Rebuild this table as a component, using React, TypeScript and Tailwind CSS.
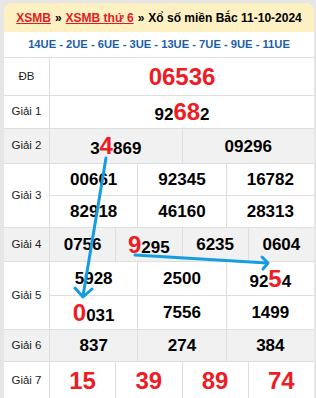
import type { ReactNode } from "react";

const Big = ({ children }: { children: ReactNode }) => (
  <span className="text-[24px] text-[#ee1c24]">{children}</span>
);

const Cell = ({ children, last }: { children: ReactNode; last?: boolean }) => (
  <div
    className={`flex-1 flex items-center justify-center text-[17px] font-bold text-black leading-none ${
      last ? "" : "border-r border-[#dedede]"
    }`}
  >
    <span>{children}</span>
  </div>
);

interface RowProps {
  label: string;
  h: string;
  gray?: boolean;
  children: ReactNode;
}

const Row = ({ label, h, gray, children }: RowProps) => (
  <div
    className={`flex ${h} border-b border-[#dedede] ${
      gray ? "bg-[#f1f1f1]" : "bg-white"
    }`}
  >
    <div className="w-[46px] shrink-0 flex items-center justify-center border-r border-[#dedede] text-[11.5px] text-[#222]">
      {label}
    </div>
    <div className="flex-1 flex flex-col">{children}</div>
  </div>
);

const Line = ({ children, top }: { children: ReactNode; top?: boolean }) => (
  <div className={`flex flex-1 ${top ? "border-b border-[#dedede]" : ""}`}>
    {children}
  </div>
);

export default function App() {
  return (
    <div className="relative w-[316px] h-[398px] overflow-hidden bg-[#e6e6e6] pt-[3px] pl-[4px] pr-[2px] font-['Liberation_Sans',Arial,sans-serif]">
      {/* header */}
      <div className="h-[29px] rounded-t-[8px] bg-[#fdf1c4] flex items-center justify-center text-[12px] font-bold text-black whitespace-nowrap">
        <span className="text-[#e01b22] underline">XSMB</span>
        <span className="mx-[4px]">»</span>
        <span className="text-[#e01b22] underline">XSMB thứ 6</span>
        <span className="mx-[4px]">»</span>
        <span>Xổ số miền Bắc 11-10-2024</span>
      </div>

      <div className="h-[26px] bg-white border-b border-[#dedede] flex items-center justify-center text-[11.2px] font-bold text-[#1c5ea8] whitespace-nowrap">
        14UE - 2UE - 6UE - 3UE - 13UE - 7UE - 9UE - 11UE
      </div>

      <Row label="ĐB" h="h-[38px]">
        <Line>
          <Cell last>
            <Big>06536</Big>
          </Cell>
        </Line>
      </Row>

      <Row label="Giải 1" h="h-[33px]">
        <Line>
          <Cell last>
            92<Big>68</Big>2
          </Cell>
        </Line>
      </Row>

      <Row label="Giải 2" h="h-[35px]" gray>
        <Line>
          <Cell>
            3<Big>4</Big>869
          </Cell>
          <Cell last>09296</Cell>
        </Line>
      </Row>

      <Row label="Giải 3" h="h-[64px]">
        <Line top>
          <Cell>00661</Cell>
          <Cell>92345</Cell>
          <Cell last>16782</Cell>
        </Line>
        <Line>
          <Cell>82918</Cell>
          <Cell>46160</Cell>
          <Cell last>28313</Cell>
        </Line>
      </Row>

      <Row label="Giải 4" h="h-[34px]" gray>
        <Line>
          <Cell>0756</Cell>
          <Cell>
            <Big>9</Big>295
          </Cell>
          <Cell>6235</Cell>
          <Cell last>0604</Cell>
        </Line>
      </Row>

      <Row label="Giải 5" h="h-[68px]">
        <Line top>
          <Cell>5928</Cell>
          <Cell>2500</Cell>
          <Cell last>
            92<Big>5</Big>4
          </Cell>
        </Line>
        <Line>
          <Cell>
            <Big>0</Big>031
          </Cell>
          <Cell>7556</Cell>
          <Cell last>1499</Cell>
        </Line>
      </Row>

      <Row label="Giải 6" h="h-[32px]" gray>
        <Line>
          <Cell>837</Cell>
          <Cell>274</Cell>
          <Cell last>384</Cell>
        </Line>
      </Row>

      <Row label="Giải 7" h="h-[38px]">
        <Line>
          <Cell>
            <Big>15</Big>
          </Cell>
          <Cell>
            <Big>39</Big>
          </Cell>
          <Cell>
            <Big>89</Big>
          </Cell>
          <Cell last>
            <Big>74</Big>
          </Cell>
        </Line>
      </Row>

      {/* arrows drawn over the table */}
      <svg
        className="absolute left-0 top-0 pointer-events-none"
        width="316"
        height="398"
        viewBox="0 0 316 398"
        fill="none"
        stroke="#159de2"
        strokeWidth="3"
        strokeLinecap="round"
        strokeLinejoin="round"
      >
        <path d="M106 158 L83 296" />
        <path d="M75 288 L83 297 L92 289" />
        <path d="M135 255 L267 263" />
        <path d="M262 257 L268 263 L263 269" />
      </svg>
    </div>
  );
}
